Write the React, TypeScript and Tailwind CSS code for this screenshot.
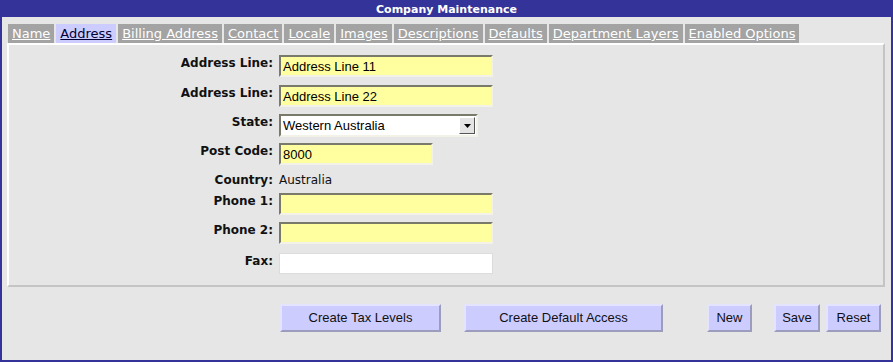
import React from 'react';

const tabs = [
  'Name',
  'Address',
  'Billing Address',
  'Contact',
  'Locale',
  'Images',
  'Descriptions',
  'Defaults',
  'Department Layers',
  'Enabled Options',
];

const inputBase =
  "h-[22px] border-2 border-t-[#7a7a6a] border-l-[#7a7a6a] border-b-[#f2f2e8] border-r-[#f2f2e8] px-[2px] text-[13px] leading-[18px] text-black font-['Liberation_Sans',Arial,sans-serif]";

const Label = ({ children }: { children: React.ReactNode }) => (
  <div className="w-[270px] shrink-0 pr-[6px] text-right text-[12px] font-bold leading-[14px] text-[#111] pt-[1px]">
    {children}
  </div>
);

const Btn = ({ children, className }: { children: React.ReactNode; className: string }) => (
  <button
    className={
      "h-[28px] bg-[#ccccff] border-2 border-t-[#e4e4ff] border-l-[#e4e4ff] border-b-[#9c9cbc] border-r-[#9c9cbc] text-[13px] text-[#111] font-['Liberation_Sans',Arial,sans-serif] " +
      className
    }
  >
    {children}
  </button>
);

export default function App() {
  return (
    <div className="w-[893px] h-[362px] border-2 border-[#333399] bg-[#e6e6e6] font-['DejaVu_Sans',Verdana,sans-serif] flex flex-col">
      <div className="h-[15px] bg-[#333399] flex items-center justify-center text-white text-[11px] font-bold leading-none">
        Company Maintenance
      </div>

      <div className="mt-[7px] ml-[6px] flex gap-[2px] h-[19px]">
        {tabs.map(t => (
          <div
            key={t}
            className={
              t === 'Address'
                ? 'bg-[#ccccff] px-[4px] text-[13px] leading-[19px] underline text-[#000033]'
                : 'bg-[#a3a3a3] px-[4px] text-[13px] leading-[19px] underline text-white'
            }
          >
            {t}
          </div>
        ))}
      </div>

      <div className="ml-[5px] mr-[6px] h-[244px] border-2 border-t-white border-l-white border-r-[#c4c4c4] border-b-[#c4c4c4] pt-[10px] flex flex-col">
        <div className="flex items-start">
          <Label>Address Line:</Label>
          <input readOnly value="Address Line 11" className={inputBase + ' w-[214px] bg-[#ffffa0]'} />
        </div>
        <div className="flex items-start mt-[8px]">
          <Label>Address Line:</Label>
          <input readOnly value="Address Line 22" className={inputBase + ' w-[214px] bg-[#ffffa0]'} />
        </div>
        <div className="flex items-start mt-[7px]">
          <Label>State:</Label>
          <div className="w-[199px] h-[23px] border-2 border-t-[#7a7a6a] border-l-[#7a7a6a] border-b-[#f2f2e8] border-r-[#f2f2e8] bg-white flex items-center justify-between">
            <span className="pl-[2px] text-[13px] text-black font-['Liberation_Sans',Arial,sans-serif]">Western Australia</span>
            <div className="w-[16px] h-[17px] mr-[1px] bg-[#e4e4e4] border border-t-white border-l-white border-b-[#555] border-r-[#555] flex items-center justify-center">
              <svg width="7" height="4" viewBox="0 0 7 4">
                <path d="M0 0 H7 L3.5 4 Z" fill="#000" />
              </svg>
            </div>
          </div>
        </div>
        <div className="flex items-start mt-[6px]">
          <Label>Post Code:</Label>
          <input readOnly value="8000" className={inputBase + ' w-[154px] bg-[#ffffa0]'} />
        </div>
        <div className="flex items-start mt-[7px] h-[14px]">
          <Label>Country:</Label>
          <span className="text-[12px] leading-[14px] pt-[1px] text-[#111]">Australia</span>
        </div>
        <div className="flex items-start mt-[7px]">
          <Label>Phone 1:</Label>
          <input readOnly value="" className={inputBase + ' w-[214px] bg-[#ffffa0]'} />
        </div>
        <div className="flex items-start mt-[7px]">
          <Label>Phone 2:</Label>
          <input readOnly value="" className={inputBase + ' w-[214px] bg-[#ffffa0]'} />
        </div>
        <div className="flex items-start mt-[9px]">
          <Label>Fax:</Label>
          <input
            readOnly
            value=""
            className="h-[21px] w-[214px] bg-white border border-[#dcdcdc]"
          />
        </div>
      </div>

      <div className="flex mt-[17px] pl-[278px]">
        <Btn className="w-[161px]">Create Tax Levels</Btn>
        <Btn className="w-[199px] ml-[23px]">Create Default Access</Btn>
        <Btn className="w-[45px] ml-[44px]">New</Btn>
        <Btn className="w-[46px] ml-[22px]">Save</Btn>
        <Btn className="w-[55px] ml-[6px]">Reset</Btn>
      </div>
    </div>
  );
}
